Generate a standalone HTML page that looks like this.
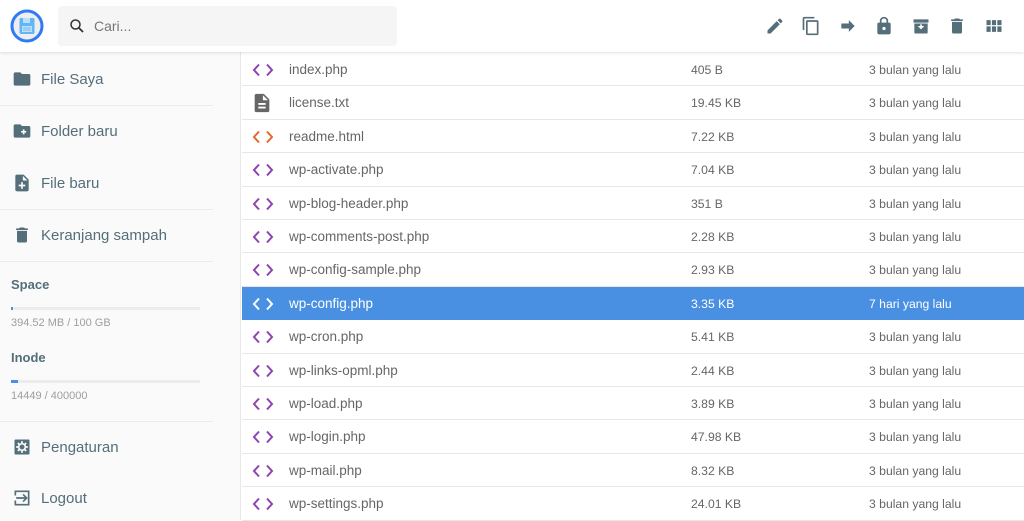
<!DOCTYPE html>
<html><head><meta charset="utf-8"><style>
*{margin:0;padding:0;box-sizing:border-box}
body{width:1024px;height:520px;overflow:hidden;background:#fff;font-family:"Liberation Sans",sans-serif;position:relative}
.hdr{position:absolute;left:0;top:0;width:1024px;height:52px;background:#fff;box-shadow:0 1px 3px rgba(0,0,0,.12);z-index:2}
.search{position:absolute;left:58px;top:6px;width:339px;height:40px;background:#f5f5f5;border-radius:4px}
.search span{position:absolute;left:36px;top:12px;font-size:14px;color:#777}
.side{position:absolute;left:0;top:52px;width:241px;height:468px;background:#fafafa;border-right:1px solid #e8e8e8}
.it{position:absolute;left:12px;font-size:15px;color:#546e7a;display:flex;align-items:center}
.it svg{margin-right:9px}
.dv{position:absolute;left:0;width:213px;height:1px;background:#ececec}
.lbl{position:absolute;left:11px;font-size:13px;color:#546e7a;font-weight:bold}
.bar{position:absolute;left:11px;width:189px;height:3px;background:#ececec}
.sm{position:absolute;left:11px;font-size:11px;color:#9e9e9e}
.row{position:absolute;left:242px;width:782px;height:33.4px;border-bottom:1px solid #e6e6e6;font-size:13.5px;color:#666}
.row.sel{background:#4a90e2;color:#fff;border-color:#4a90e2}
.row .n{position:absolute;left:47px;top:9px}
.row .s{position:absolute;left:449px;top:10px;font-size:12.2px}
.row .d{position:absolute;left:627px;top:10px;font-size:12.2px}
.row svg{position:absolute;left:9px;top:6px}
</style></head><body>
<div class="hdr">
<svg style="position:absolute;left:10px;top:9px" width="34" height="34" viewBox="0 0 34 34"><circle cx="17" cy="17" r="15" fill="#eee" stroke="#2f7bf6" stroke-width="3"/><rect x="9.5" y="9" width="15" height="16" rx="1.5" fill="#64b5f6"/><rect x="13" y="9" width="7" height="5" fill="#bbdefb"/><rect x="12" y="17" width="10" height="6" fill="#bbdefb"/><path d="M13 19h8M13 21h8" stroke="#64b5f6" stroke-width="0.8"/></svg>
<div class="search"><svg style="position:absolute;left:10px;top:11px" width="18" height="18" viewBox="0 0 24 24"><circle cx="10" cy="10" r="6" fill="none" stroke="#333" stroke-width="2"/><path d="M14.5 14.5L20 20" stroke="#333" stroke-width="2.4"/></svg><span>Cari...</span></div>
<svg style="position:absolute;left:765px;top:16px" width="20" height="20" viewBox="0 0 24 24"><path fill="#546e7a" d="M3 17.25V21h3.75L17.8 9.94l-3.75-3.75L3 17.25zM20.7 7.04a1 1 0 000-1.41l-2.34-2.34a1 1 0 00-1.41 0l-1.83 1.83 3.75 3.75 1.83-1.83z"/></svg>
<svg style="position:absolute;left:801px;top:16px" width="20" height="20" viewBox="0 0 24 24"><path fill="#546e7a" d="M16 1H4a2 2 0 00-2 2v14h2V3h12V1zm3 4H8a2 2 0 00-2 2v14a2 2 0 002 2h11a2 2 0 002-2V7a2 2 0 00-2-2zm0 16H8V7h11v14z"/></svg>
<svg style="position:absolute;left:838px;top:16px" width="20" height="20" viewBox="0 0 24 24"><path fill="#546e7a" d="M4 9h9V5l7 7-7 7v-4H4z"/></svg>
<svg style="position:absolute;left:874px;top:15px" width="20" height="22" viewBox="0 0 24 24"><path fill="#546e7a" d="M18 8h-1V6a5 5 0 00-10 0v2H6a2 2 0 00-2 2v10a2 2 0 002 2h12a2 2 0 002-2V10a2 2 0 00-2-2zM9 6a3 3 0 016 0v2H9V6zm3 11a2 2 0 110-4 2 2 0 010 4z"/></svg>
<svg style="position:absolute;left:911px;top:16px" width="20" height="20" viewBox="0 0 24 24"><path fill="#546e7a" d="M3 4h18v4H3zM4 9h16v11a1 1 0 01-1 1H5a1 1 0 01-1-1zm4 3l4 4 4-4h-3v-2h-2v2z"/></svg>
<svg style="position:absolute;left:947px;top:16px" width="20" height="20" viewBox="0 0 24 24"><path fill="#546e7a" d="M6 19a2 2 0 002 2h8a2 2 0 002-2V7H6v12zM19 4h-3.5l-1-1h-5l-1 1H5v2h14V4z"/></svg>
<svg style="position:absolute;left:984px;top:16px" width="20" height="20" viewBox="0 0 24 24"><path fill="#546e7a" d="M3 5h5v6H3zM9.5 5h5v6h-5zM16 5h5v6h-5zM3 12.5h5V19H3zM9.5 12.5h5V19h-5zM16 12.5h5V19h-5z"/></svg>
</div>
<div class="side">
<div class="it" style="top:17px"><svg width="20" height="20" viewBox="0 0 24 24"><path fill="#546e7a" d="M10 4H4a2 2 0 00-2 2v12a2 2 0 002 2h16a2 2 0 002-2V8a2 2 0 00-2-2h-8l-2-2z"/></svg>File Saya</div>
<div class="dv" style="top:53px"></div>
<div class="it" style="top:69px"><svg width="20" height="20" viewBox="0 0 24 24"><path fill="#546e7a" d="M10 4H4a2 2 0 00-2 2v12a2 2 0 002 2h16a2 2 0 002-2V8a2 2 0 00-2-2h-8l-2-2zm1 8h2v-2h2v2h2v2h-2v2h-2v-2h-2z"/></svg>Folder baru</div>
<div class="it" style="top:121px"><svg width="20" height="20" viewBox="0 0 24 24"><path fill="#546e7a" d="M14 2H6a2 2 0 00-2 2v16a2 2 0 002 2h12a2 2 0 002-2V8l-6-6zm2 14h-3v3h-2v-3H8v-2h3v-3h2v3h3v2zM13 9V3.5L18.5 9H13z"/></svg>File baru</div>
<div class="dv" style="top:157px"></div>
<div class="it" style="top:173px"><svg width="20" height="20" viewBox="0 0 24 24"><path fill="#546e7a" d="M6 19a2 2 0 002 2h8a2 2 0 002-2V7H6v12zM19 4h-3.5l-1-1h-5l-1 1H5v2h14V4z"/></svg>Keranjang sampah</div>
<div class="dv" style="top:209px"></div>
<div class="lbl" style="top:225px">Space</div>
<div class="bar" style="top:255px"><div style="width:2px;height:3px;background:#4a90e2"></div></div>
<div class="sm" style="top:265px">394.52 MB / 100 GB</div>
<div class="lbl" style="top:298px">Inode</div>
<div class="bar" style="top:328px"><div style="width:7px;height:3px;background:#4a90e2"></div></div>
<div class="sm" style="top:338px">14449 / 400000</div>
<div class="dv" style="top:369px"></div>
<div class="it" style="top:385px"><svg width="20" height="20" viewBox="0 0 24 24"><path fill="#546e7a" d="M4 3h16a1 1 0 011 1v16a1 1 0 01-1 1H4a1 1 0 01-1-1V4a1 1 0 011-1zm8 6a3 3 0 100 6 3 3 0 000-6zM11 5v2.2l-1.8.8-1.5-1.5-1.4 1.4 1.5 1.5L7.1 11H5v2h2.1l.7 1.6-1.5 1.5 1.4 1.4 1.5-1.5 1.8.8V19h2v-2.2l1.8-.8 1.5 1.5 1.4-1.4-1.5-1.5.7-1.6H19v-2h-2.1l-.7-1.6 1.5-1.5-1.4-1.4-1.5 1.5-1.8-.8V5z"/></svg>Pengaturan</div>
<div class="it" style="top:436px"><svg width="20" height="20" viewBox="0 0 24 24"><path fill="#546e7a" d="M10 17l1.4-1.4L8.8 13H19v-2H8.8l2.6-2.6L10 7l-5 5zM3 3v18h18v-6h-2v4H5V5h14v4h2V3z" transform="scale(-1,1) translate(-24,0)"/></svg>Logout</div>
</div>
<div id="rows"></div>
<script>
var d=[["index.php","405 B","3 bulan yang lalu"],["license.txt","19.45 KB","3 bulan yang lalu","t"],["readme.html","7.22 KB","3 bulan yang lalu","h"],["wp-activate.php","7.04 KB","3 bulan yang lalu"],["wp-blog-header.php","351 B","3 bulan yang lalu"],["wp-comments-post.php","2.28 KB","3 bulan yang lalu"],["wp-config-sample.php","2.93 KB","3 bulan yang lalu"],["wp-config.php","3.35 KB","7 hari yang lalu","s"],["wp-cron.php","5.41 KB","3 bulan yang lalu"],["wp-links-opml.php","2.44 KB","3 bulan yang lalu"],["wp-load.php","3.89 KB","3 bulan yang lalu"],["wp-login.php","47.98 KB","3 bulan yang lalu"],["wp-mail.php","8.32 KB","3 bulan yang lalu"],["wp-settings.php","24.01 KB","3 bulan yang lalu"]];
var h="";d.forEach(function(r,i){var c=r[3]=="s"?"#fff":r[3]=="h"?"#e2692e":"#8e44ad";
var ic=r[3]=="t"?'<svg width="22" height="22" viewBox="0 0 24 24"><path fill="#666" d="M14 2H6a2 2 0 00-2 2v16a2 2 0 002 2h12a2 2 0 002-2V8l-6-6zm2 16H8v-2h8v2zm0-4H8v-2h8v2zm-3-5V3.5L18.5 9H13z"/></svg>':'<svg width="24" height="22" viewBox="0 0 24 22"><path d="M8 5.5l-5 5.5 5 5.5M16 5.5l5 5.5-5 5.5" fill="none" stroke="'+c+'" stroke-width="2"/></svg>';
h+='<div class="row'+(r[3]=="s"?" sel":"")+'" style="top:'+(53+i*33.4)+'px">'+ic+'<span class="n">'+r[0]+'</span><span class="s">'+r[1]+'</span><span class="d">'+r[2]+'</span></div>';});
document.getElementById("rows").innerHTML=h;
</script>
</body></html>
